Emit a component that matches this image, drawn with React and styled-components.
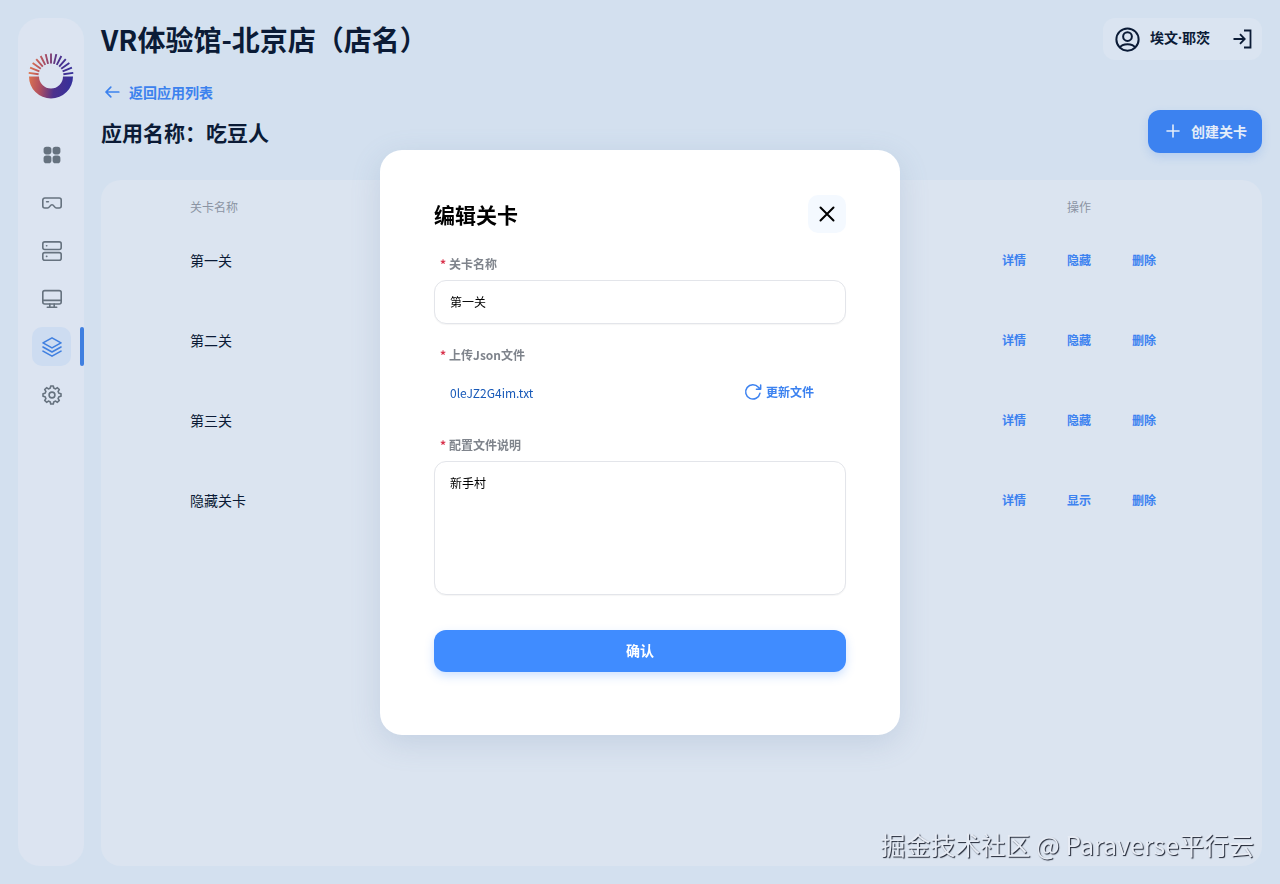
import React, { useState } from 'react';
import styled, { createGlobalStyle } from 'styled-components';

const GlobalStyle = createGlobalStyle`
  * {
    box-sizing: border-box;
  }
  body {
    margin: 0;
    background: #d3e0ef;
    color: #0b1b36;
    font-family: 'Noto Sans CJK SC', sans-serif;
    font-size: 14px;
  }
  button, input, textarea {
    font-family: inherit;
  }
  a {
    text-decoration: none;
  }
  h1, h2, p {
    margin: 0;
  }
`;

const Page = styled.div`
  display: flex;
  gap: 17px;
  min-height: 100vh;
  padding: 18px;
`;

const Sidebar = styled.aside`
  display: flex;
  flex-direction: column;
  gap: 36px;
  flex: 0 0 66px;
  padding-top: 35px;
  border-radius: 22px;
  background: #dce4f1;
  & > svg {
    align-self: center;
  }
`;

const Nav = styled.nav`
  display: flex;
  flex-direction: column;
  gap: 9px;
`;

const NavItem = styled.a`
  display: grid;
  grid-template-columns: 39px 4px;
  justify-content: end;
  column-gap: 9px;
  height: 39px;
  color: ${({ $active }) => ($active ? '#3f7fe0' : '#66727f')};
  & span {
    display: grid;
    place-items: center;
    border-radius: 10px;
    background: ${({ $active }) => ($active ? '#cddcf1' : 'transparent')};
  }
  &::after {
    content: '';
    border-radius: 2px;
    background: ${({ $active }) => ($active ? '#3f7fe0' : 'transparent')};
  }
`;

const Main = styled.main`
  display: flex;
  flex-direction: column;
  flex: 1;
  min-width: 0;
`;

const Header = styled.header`
  display: flex;
  justify-content: space-between;
  height: 42px;
`;

const Title = styled.h1`
  font-size: 28px;
  line-height: 42px;
  font-weight: bold;
`;

const User = styled.div`
  display: flex;
  align-items: center;
  padding: 0 10px 0 12px;
  border-radius: 12px;
  background: #dae4f1;
  font-weight: bold;
  & p {
    margin: 0 22px 0 10px;
    padding-bottom: 2px;
    font-family: 'Noto Sans', 'Noto Sans CJK SC', sans-serif;
    line-height: 20px;
  }
`;

const IconButton = styled.button`
  display: flex;
  padding: 0;
  border: none;
  background: none;
  color: inherit;
  cursor: pointer;
`;

const Toolbar = styled.div`
  display: flex;
  justify-content: space-between;
  align-items: flex-end;
  margin: 22px 0 27px;
`;

const BackLink = styled.a`
  display: flex;
  align-items: center;
  gap: 9px;
  padding-left: 3px;
  margin-bottom: 11px;
  color: #3c82ee;
  font-weight: bold;
  line-height: 20px;
`;

const AppName = styled.h2`
  padding-bottom: 2px;
  font-size: 21px;
  line-height: 38px;
  font-weight: bold;
`;

const PrimaryButton = styled.button`
  display: flex;
  align-items: center;
  justify-content: center;
  gap: 8px;
  width: ${({ $block }) => ($block ? '100%' : 'auto')};
  height: ${({ $block }) => ($block ? '42px' : '43px')};
  padding: 0 15px 2px;
  border: none;
  border-radius: 12px;
  background: ${({ $block }) => ($block ? '#408cff' : '#3c82f0')};
  box-shadow: 0 4px 10px ${({ $block }) => ($block ? '#408cff40' : '#3c82f033')};
  color: ${({ $block }) => ($block ? '#fff' : '#e4edf9')};
  font-size: 14px;
  font-weight: bold;
  line-height: 20px;
  cursor: pointer;
`;

const Panel = styled.section`
  flex: 1;
  border-radius: 20px;
  background: #dbe4f0;
`;

const Table = styled.table`
  width: 100%;
  border-collapse: collapse;
  table-layout: fixed;
  & th {
    height: 40px;
    padding: 14px 0 0;
    color: #8b94a3;
    font-size: 12px;
    font-weight: normal;
    line-height: 20px;
  }
  & td {
    height: 80px;
    padding: 0;
    line-height: 20px;
  }
  & th:first-child, td:first-child {
    padding-left: 89px;
    text-align: left;
  }
  & th:last-child {
    width: 366px;
  }
`;

const Actions = styled.div`
  display: flex;
  justify-content: center;
  gap: 41px;
`;

const TextButton = styled.button`
  display: flex;
  align-items: center;
  gap: 4px;
  padding: 0;
  border: none;
  background: none;
  color: #3c82f0;
  font-size: 12px;
  font-weight: bold;
  line-height: 20px;
  cursor: pointer;
`;

const Overlay = styled.div`
  position: fixed;
  inset: 0;
  display: grid;
  place-items: center;
`;

const Modal = styled.form`
  display: flex;
  flex-direction: column;
  gap: 21px;
  width: 520px;
  padding: 45px 54px 63px;
  border-radius: 22px;
  background: #fff;
  box-shadow: 0 8px 30px #6482aa33;
`;

const ModalHeader = styled.div`
  display: flex;
  align-items: center;
  justify-content: space-between;
  color: #000;
  & ${IconButton} {
    align-items: center;
    justify-content: center;
    width: 38px;
    height: 38px;
    border-radius: 10px;
    background: #f4f9ff;
  }
`;

const ModalTitle = styled.h2`
  font-size: 21px;
  line-height: 38px;
  font-weight: bold;
`;

const Field = styled.div`
  display: flex;
  flex-direction: column;
  gap: 6px;
`;

const Label = styled.label`
  padding-left: 6px;
  color: #7f848c;
  font-size: 12px;
  font-weight: bold;
  line-height: 20px;
  &::before {
    content: '*';
    margin-right: 3px;
    color: #d8304a;
  }
`;

const Input = styled.input`
  height: 44px;
  padding: 0 15px;
  border: 1px solid #e3e5ea;
  border-radius: 12px;
  outline: none;
  box-shadow: 0 1px 1px #0000000a;
  color: #000;
  font-size: 12px;
`;

const TextArea = styled.textarea`
  height: 134px;
  margin-bottom: 14px;
  padding: 11px 15px;
  border: 1px solid #e3e5ea;
  border-radius: 12px;
  outline: none;
  resize: none;
  box-shadow: 0 1px 1px #0000000a;
  color: #000;
  font-size: 12px;
  line-height: 20px;
`;

const FileRow = styled.div`
  display: flex;
  align-items: center;
  justify-content: space-between;
  height: 43px;
  padding: 0 32px 0 16px;
  & a {
    color: #1759b8;
    font-size: 12px;
  }
`;

const Watermark = styled.p`
  position: fixed;
  right: 26px;
  bottom: 22px;
  color: #e6ebf4;
  font-size: 25px;
  line-height: 36px;
  text-shadow: 1px 1px 1px #1c2230;
`;

const Icon = ({ size = 20, width = 1.6, children }) => (
  <svg width={size} height={size} viewBox="0 0 20 20" fill="none" stroke="currentColor"
    strokeWidth={width} strokeLinecap="round" strokeLinejoin="round" aria-hidden="true">
    {children}
  </svg>
);

const rays = Array.from({ length: 13 }, (_, i) => -172 + i * (164 / 12));

const Logo = () => (
  <svg width="46" height="46" viewBox="0 0 46 46" aria-hidden="true">
    <defs>
      <linearGradient id="logo" gradientUnits="userSpaceOnUse" x1="0" y1="20" x2="46" y2="26">
        <stop offset="0" stopColor="#e0774f" />
        <stop offset="0.3" stopColor="#b04f60" />
        <stop offset="0.6" stopColor="#4d318c" />
        <stop offset="1" stopColor="#33309c" />
      </linearGradient>
    </defs>
    <path d="M1 23.500h10a12 12 0 0 0 24 0h10a22 22 0 0 1-44 0z" fill="url(#logo)" />
    {rays.map((deg) => {
      const a = (deg * Math.PI) / 180;
      return (
        <line key={deg} x1={23 + 12.5 * Math.cos(a)} y1={23 + 12.5 * Math.sin(a)}
          x2={23 + 22.5 * Math.cos(a)} y2={23 + 22.5 * Math.sin(a)} stroke="url(#logo)" strokeWidth="1.9" />
      );
    })}
  </svg>
);

const navItems = [
  {
    name: '概览',
    icon: (
      <g fill="currentColor" stroke="none">
        <rect x="1.600" y="1.800" width="7.800" height="7.600" rx="2.800" />
        <rect x="10.600" y="1.800" width="7.800" height="7.600" rx="2.800" />
        <rect x="1.600" y="10.600" width="7.800" height="7.600" rx="2.800" />
        <rect x="10.600" y="10.600" width="7.800" height="7.600" rx="2.800" />
      </g>
    ),
  },
  {
    name: '设备',
    icon: (
      <>
        <path d="M2.800 5h14.400a2 2 0 0 1 2 2v6a2 2 0 0 1-2 2h-2.700c-2.300 0-2.300-3.200-4.500-3.200S7.800 15 5.500 15H2.800a2 2 0 0 1-2-2V7a2 2 0 0 1 2-2z" />
        <path d="M4.600 8.700h1.800" />
      </>
    ),
  },
  {
    name: '服务器',
    icon: (
      <>
        <rect x="0.8" y="0.9" width="18.400" height="7.600" rx="2" />
        <rect x="0.8" y="11.600" width="18.400" height="7.600" rx="2" />
        <path d="M4.500 4.800h.3M4.500 15.400h.3" />
      </>
    ),
  },
  {
    name: '终端',
    icon: (
      <>
        <rect x="0.8" y="1.600" width="18.400" height="13.400" rx="2" />
        <path d="M1 11.400h18M7.800 15v3M12.200 15v3M5.300 18.300h9.400" />
      </>
    ),
  },
  {
    name: '应用',
    active: true,
    icon: (
      <>
        <path d="M10 .9l9 5-9 5-9-5z" />
        <path d="M1 10l9 5 9-5M1 14.100l9 5 9-5" />
      </>
    ),
  },
  {
    name: '设置',
    icon: (
      <>
        <path d="M8.300 3.100 8.700 1h2.600l.4 2.100 1.900.8 1.800-1.200 1.900 1.900-1.200 1.800.8 1.900 2.100.4v2.600l-2.100.4-.8 1.900 1.200 1.800-1.900 1.900-1.800-1.200-1.900.8-.4 2.100H8.700l-.4-2.100-1.900-.8-1.800 1.200-1.900-1.900 1.200-1.800-.8-1.900L1 11.300V8.700l2.100-.4.8-1.900-1.200-1.800 1.900-1.900 1.800 1.200z" />
        <circle cx="10" cy="10" r="2.900" />
      </>
    ),
  },
];

const initialLevels = [
  { name: '第一关', hidden: false },
  { name: '第二关', hidden: false },
  { name: '第三关', hidden: false },
  { name: '隐藏关卡', hidden: true },
];

function EditLevel({ onClose }) {
  const [name, setName] = useState('第一关');
  const [desc, setDesc] = useState('新手村');

  const onSubmit = (e) => {
    e.preventDefault();
    onClose();
  };

  return (
    <Overlay>
      <Modal role="dialog" aria-labelledby="edit-title" onSubmit={onSubmit}>
        <ModalHeader>
          <ModalTitle id="edit-title">编辑关卡</ModalTitle>
          <IconButton type="button" aria-label="关闭" onClick={onClose}>
            <Icon width={2}><path d="M3.500 3.500l13 13M16.500 3.500l-13 13" /></Icon>
          </IconButton>
        </ModalHeader>
        <Field>
          <Label htmlFor="level-name">关卡名称</Label>
          <Input id="level-name" value={name} onChange={(e) => setName(e.target.value)} />
        </Field>
        <Field>
          <Label htmlFor="level-file">上传Json文件</Label>
          <FileRow>
            <a href="#file">0leJZ2G4im.txt</a>
            <TextButton id="level-file" type="button">
              <Icon size={18} width={1.7}>
                <path d="M17.700 11.500A8 8 0 1 1 16 4.700L18.300 7M18.500 2.300V7h-4.700" />
              </Icon>
              更新文件
            </TextButton>
          </FileRow>
        </Field>
        <Field>
          <Label htmlFor="level-desc">配置文件说明</Label>
          <TextArea id="level-desc" value={desc} onChange={(e) => setDesc(e.target.value)} />
        </Field>
        <PrimaryButton $block type="submit">确认</PrimaryButton>
      </Modal>
    </Overlay>
  );
}

function App() {
  const [open, setOpen] = useState(true);
  const [levels, setLevels] = useState(initialLevels);

  const toggleHidden = (index) =>
    setLevels(levels.map((l, i) => (i === index ? { ...l, hidden: !l.hidden } : l)));
  const remove = (index) => setLevels(levels.filter((_, i) => i !== index));

  return (
    <>
      <GlobalStyle />
      <Page>
        <Sidebar>
          <Logo />
          <Nav>
            {navItems.map(({ name, icon, active }) => (
              <NavItem key={name} href="#" aria-label={name} $active={active}>
                <span><Icon>{icon}</Icon></span>
              </NavItem>
            ))}
          </Nav>
        </Sidebar>
        <Main>
          <Header>
            <Title>VR体验馆-北京店（店名）</Title>
            <User>
              <Icon size={25}>
                <circle cx="10" cy="10" r="8.900" />
                <circle cx="10" cy="7.600" r="3.500" />
                <path d="M4 16.300c1-2 3-2.600 6-2.600s5 .6 6 2.600" />
              </Icon>
              <p>埃文·耶茨</p>
              <IconButton aria-label="退出">
                <Icon width={1.8}>
                  <path d="M1.500 10h11M8 5.200l4.700 4.800L8 14.800M12 1.500h6.500v17H12" strokeLinecap="butt" strokeLinejoin="miter" />
                </Icon>
              </IconButton>
            </User>
          </Header>
          <Toolbar>
            <div>
              <BackLink href="#apps">
                <Icon size={16} width={2.1}><path d="M18.500 10H2.500M8.500 4L2.500 10l6 6" /></Icon>
                返回应用列表
              </BackLink>
              <AppName>应用名称：吃豆人</AppName>
            </div>
            <PrimaryButton onClick={() => setOpen(true)}>
              <Icon><path d="M10 4v12M4 10h12" /></Icon>
              创建关卡
            </PrimaryButton>
          </Toolbar>
          <Panel>
            <Table>
              <thead>
                <tr>
                  <th>关卡名称</th>
                  <th>操作</th>
                </tr>
              </thead>
              <tbody>
                {levels.map((level, i) => (
                  <tr key={level.name}>
                    <td>{level.name}</td>
                    <td>
                      <Actions>
                        <TextButton onClick={() => setOpen(true)}>详情</TextButton>
                        <TextButton onClick={() => toggleHidden(i)}>{level.hidden ? '显示' : '隐藏'}</TextButton>
                        <TextButton onClick={() => remove(i)}>删除</TextButton>
                      </Actions>
                    </td>
                  </tr>
                ))}
              </tbody>
            </Table>
          </Panel>
        </Main>
      </Page>
      {open && <EditLevel onClose={() => setOpen(false)} />}
      <Watermark>掘金技术社区 @ Paraverse平行云</Watermark>
    </>
  );
}

export default App;
